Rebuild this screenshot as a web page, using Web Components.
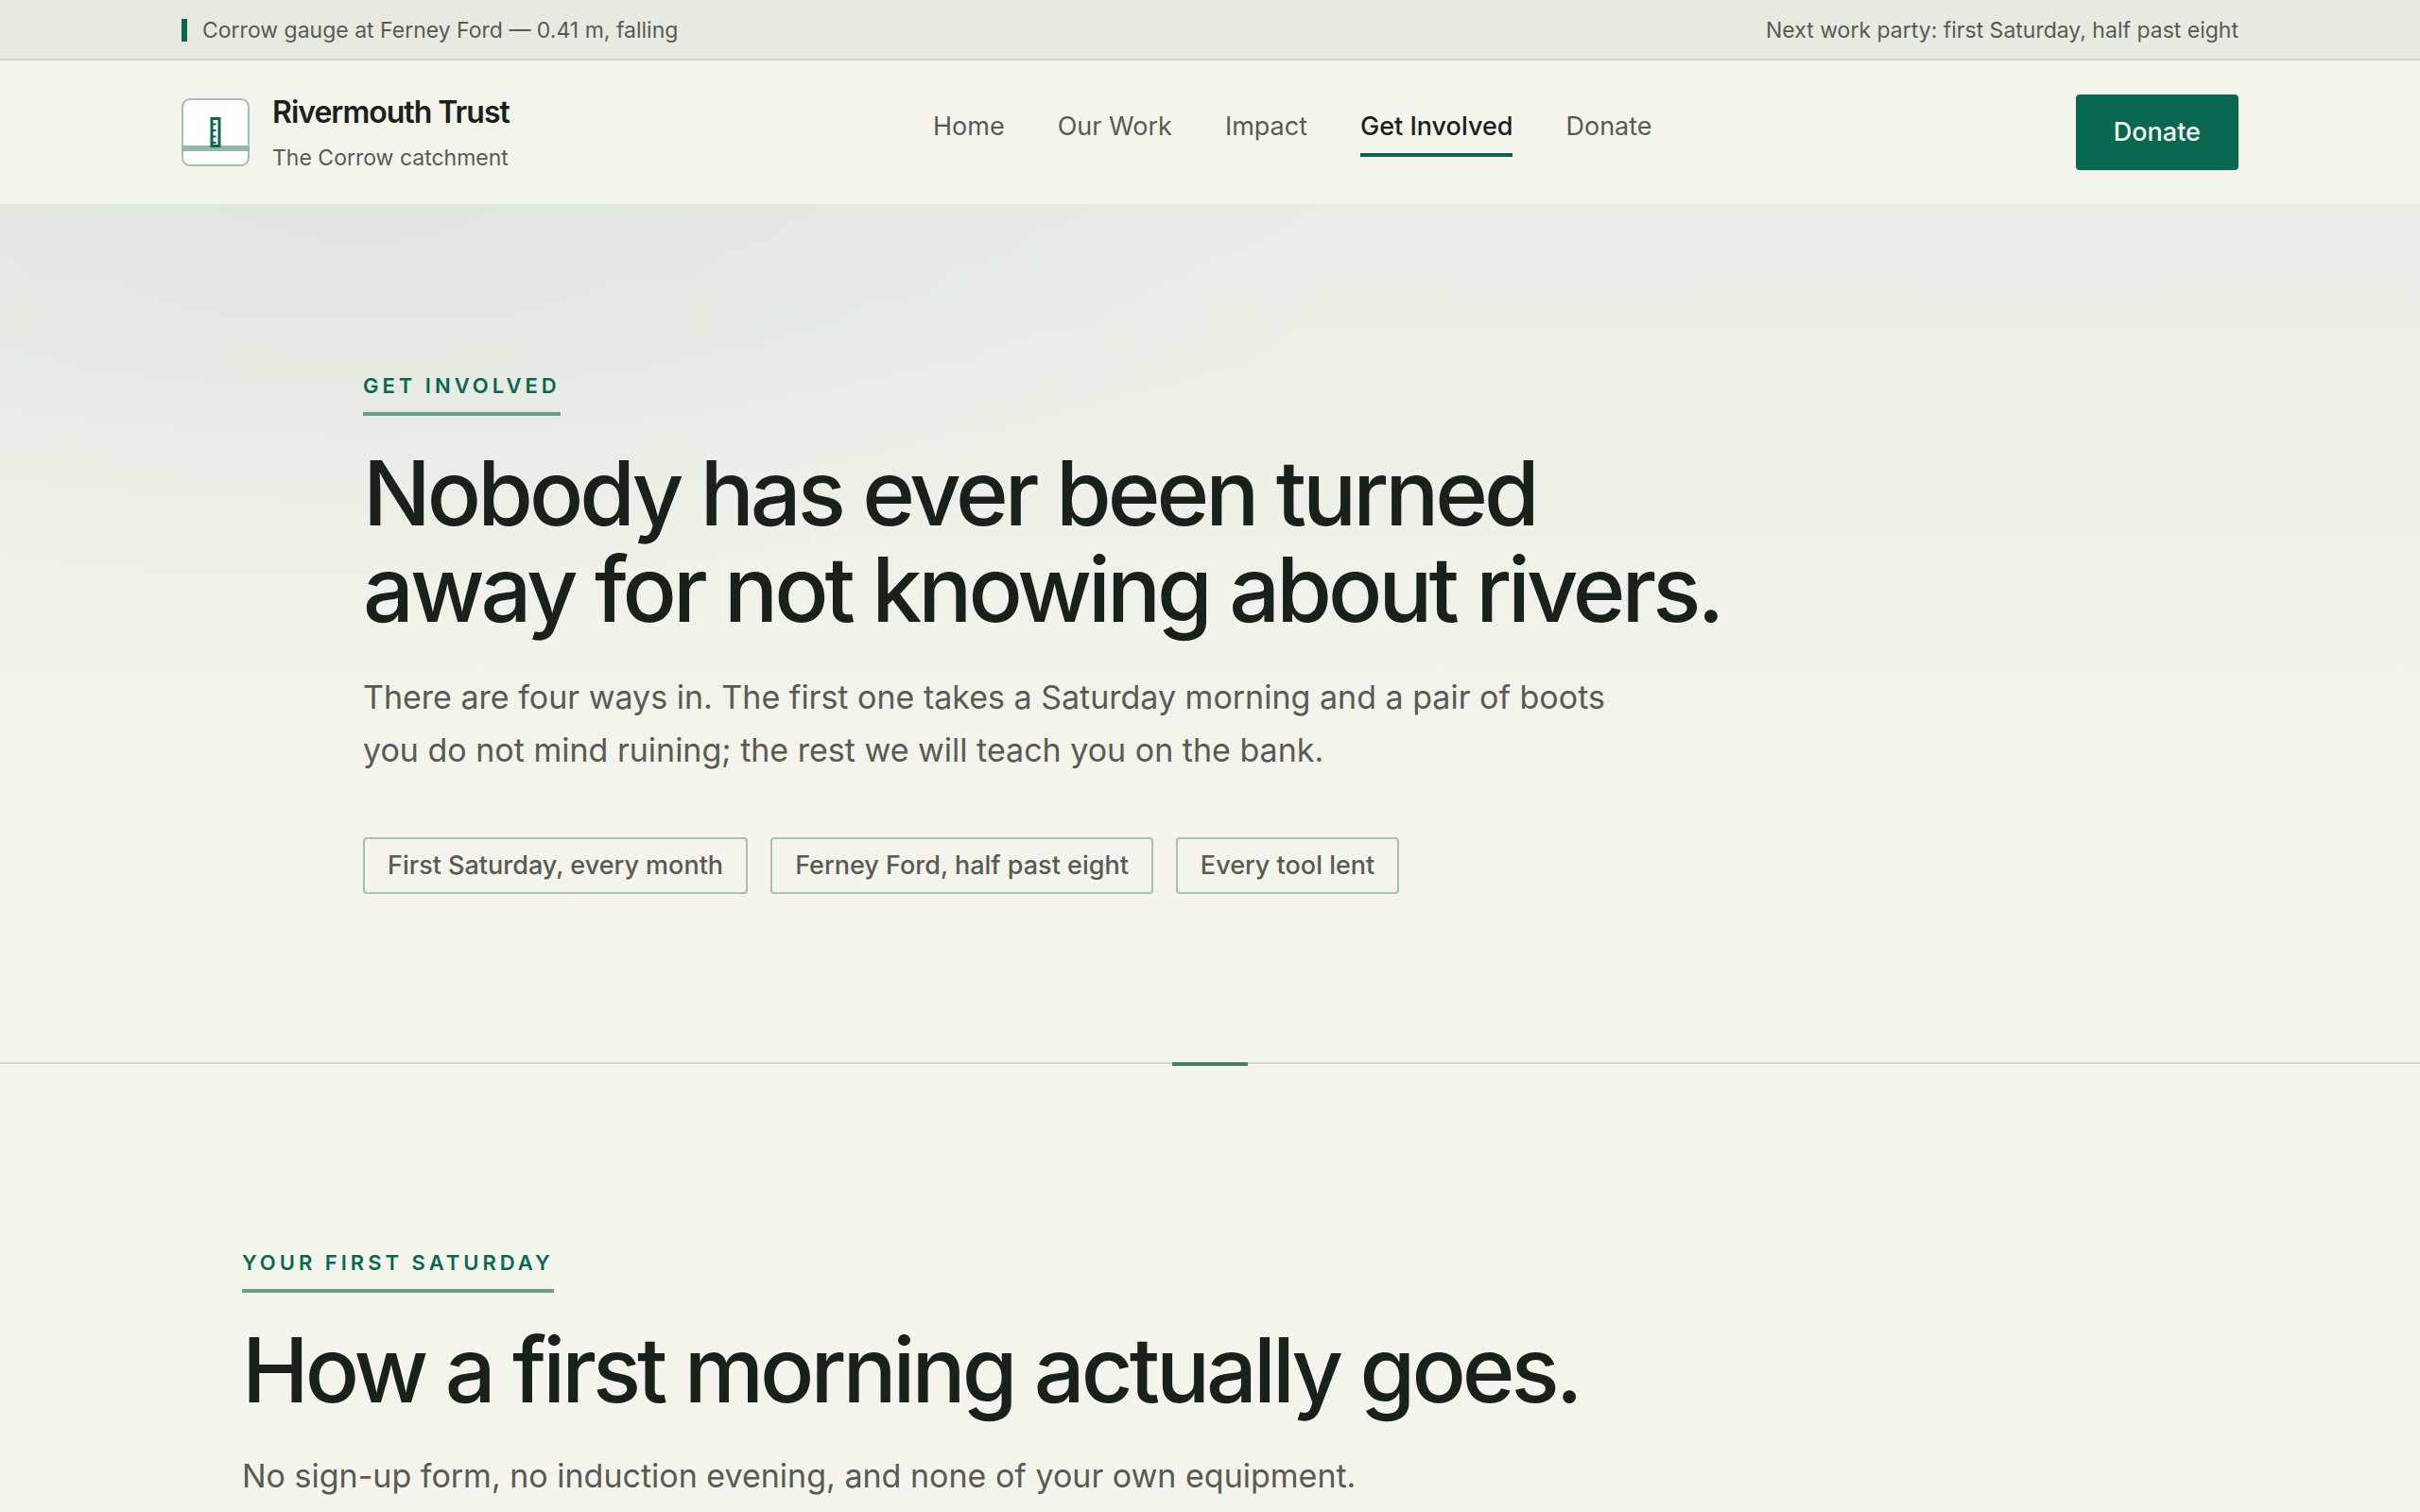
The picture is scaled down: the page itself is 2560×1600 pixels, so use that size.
<!DOCTYPE html>
<html lang="en">
<head>
<meta charset="utf-8">
<meta name="viewport" content="width=device-width, initial-scale=1">
<title>Get Involved — Rivermouth Trust</title>
<style>
  :root {
    --paper: #f4f4ec;
    --mist: #e7eae1;
    --line: #d2d7cc;
    --ink: #18211a;
    --muted: #575b53;
    --green: #09674f;
    --green-soft: #6c9f89;
    --green-line: #a9c0b1;
    --gutter: 192px;
  }
  body {
    margin: 0;
    min-height: 100vh;
    background: var(--paper);
    color: var(--ink);
    font-family: Inter, "Liberation Sans", sans-serif;
    font-size: 27px;
  }
</style>
</head>
<body>
<gauge-bar>
  <span slot="reading">Corrow gauge at Ferney Ford — 0.41 m, falling</span>
  <span slot="event">Next work party: first Saturday, half past eight</span>
</gauge-bar>
<site-header>
  <brand-mark slot="brand">Rivermouth Trust<span slot="place">The Corrow catchment</span></brand-mark>
  <nav-link href="#home">Home</nav-link>
  <nav-link href="#work">Our Work</nav-link>
  <nav-link href="#impact">Impact</nav-link>
  <nav-link href="#involved" current>Get Involved</nav-link>
  <nav-link href="#donate">Donate</nav-link>
  <donate-button slot="action">Donate</donate-button>
</site-header>
<main>
  <page-hero>
    <section-intro level="1">
      <span slot="eyebrow">Get involved</span>
      <span slot="title">Nobody has ever been turned<br>away for not knowing about rivers.</span>
      <span slot="lead">There are four ways in. The first one takes a Saturday morning and a pair of boots<br>you do not mind ruining; the rest we will teach you on the bank.</span>
    </section-intro>
    <fact-chip slot="facts">First Saturday, every month</fact-chip>
    <fact-chip slot="facts">Ferney Ford, half past eight</fact-chip>
    <fact-chip slot="facts">Every tool lent</fact-chip>
  </page-hero>
  <section-rule></section-rule>
  <page-section>
    <section-intro level="2">
      <span slot="eyebrow">Your first Saturday</span>
      <span slot="title">How a first morning actually goes.</span>
      <span slot="lead">No sign-up form, no induction evening, and none of your own equipment.</span>
    </section-intro>
  </page-section>
</main>
<script>
  const define = (name, html, setup) => {
    const template = document.createElement('template');
    template.innerHTML = html;
    customElements.define(name, class extends HTMLElement {
      constructor() {
        super();
        this.attachShadow({ mode: 'open' }).append(template.content.cloneNode(true));
      }
      connectedCallback() {
        if (setup) setup(this, this.shadowRoot);
      }
    });
  };

  define('gauge-bar', `
    <style>
      :host {
        display: flex; justify-content: space-between; align-items: center;
        padding: 14px var(--gutter) 12px; border-bottom: 2px solid var(--line);
        background: var(--mist); color: var(--muted);
        font-size: 23px; line-height: 36px;
      }
      .reading { display: flex; align-items: center; gap: 16px; }
      .level { width: 6px; height: 24px; background: var(--green); }
    </style>
    <div class="reading"><i class="level"></i><slot name="reading"></slot></div>
    <slot name="event"></slot>`);

  define('brand-mark', `
    <style>
      :host { display: block; }
      a { display: flex; align-items: center; gap: 24px; color: inherit; text-decoration: none; }
      svg { display: block; width: 72px; height: 72px; }
      .words { display: flex; flex-direction: column; gap: 8px; }
      .name { font-size: 32px; line-height: 46px; font-weight: 600; letter-spacing: -1px; }
      .place { font-size: 23px; line-height: 34px; color: var(--muted); }
    </style>
    <a href="#home">
      <svg viewBox="0 0 72 72" aria-hidden="true">
        <rect x="1" y="1" width="70" height="70" rx="8" fill="#fefefb" stroke="#a3bfb2" stroke-width="2"/>
        <rect y="50" width="72" height="6" fill="#92b7a7"/>
        <path d="M32 21.500H40V50.500H32Z" fill="#fefefb" stroke="#09674f" stroke-width="3"/>
        <path d="M32 27.500H36.500M32 34H36.500M32 40.500H36.500M32 47H36.500" stroke="#09674f" stroke-width="2.200"/>
      </svg>
      <span class="words"><span class="name"><slot></slot></span><span class="place"><slot name="place"></slot></span></span>
    </a>`);

  define('nav-link', `
    <style>
      :host { display: block; }
      a {
        display: block; padding-bottom: 8px; border-bottom: 4px solid transparent;
        color: var(--muted); text-decoration: none; font-size: 27px; line-height: 40px;
      }
      :host([current]) a { color: var(--ink); font-weight: 500; border-color: var(--green); }
    </style>
    <a><slot></slot></a>`, (host, root) => {
      const a = root.querySelector('a');
      a.href = host.getAttribute('href');
      if (host.hasAttribute('current')) a.setAttribute('aria-current', 'page');
    });

  define('donate-button', `
    <style>
      :host { display: block; }
      button {
        display: block; margin: 0; padding: 20px 40px; border: 0; border-radius: 4px;
        background: var(--green); color: #f4fbf5;
        font: 500 27px/40px Inter, "Liberation Sans", sans-serif;
      }
    </style>
    <button type="button"><slot></slot></button>`);

  define('site-header', `
    <style>
      :host { display: block; }
      header {
        display: flex; justify-content: space-between; align-items: center;
        padding: 32px var(--gutter); background: var(--paper);
      }
      nav { display: flex; gap: 56px; }
    </style>
    <header>
      <slot name="brand"></slot>
      <nav aria-label="Main"><slot></slot></nav>
      <slot name="action"></slot>
    </header>`);

  define('section-intro', `
    <style>
      :host { display: flex; flex-direction: column; align-items: flex-start; }
      .eyebrow {
        margin: 0; padding-bottom: 12px; border-bottom: 4px solid var(--green-soft);
        color: var(--green); font-size: 22px; line-height: 32px; font-weight: 600;
        letter-spacing: 4px; text-transform: uppercase;
      }
      .title {
        margin: 31px 0 0; font-size: 95px; line-height: 102px; font-weight: 500;
        letter-spacing: -4px;
      }
      .lead { margin: 35px 0 0; font-size: 34px; line-height: 56px; color: var(--muted); }
      :host([level="2"]) .lead { margin-top: 33px; }
    </style>
    <p class="eyebrow"><slot name="eyebrow"></slot></p>
    <div class="title" role="heading"><slot name="title"></slot></div>
    <p class="lead"><slot name="lead"></slot></p>`, (host, root) => {
      root.querySelector('.title').setAttribute('aria-level', host.getAttribute('level'));
    });

  define('fact-chip', `
    <style>
      :host {
        display: block; padding: 8px 24px; border: 2px solid var(--green-line); border-radius: 4px;
        color: var(--muted); font-size: 27px; line-height: 40px; font-weight: 500;
      }
    </style>
    <slot></slot>`);

  define('page-hero', `
    <style>
      :host {
        display: block; padding: 176px calc(var(--gutter) * 2) 178px;
        background:
          radial-gradient(ellipse 42% 46% at 15% 0%, rgba(9, 103, 79, .055), rgba(9, 103, 79, 0)),
          linear-gradient(#eaede5, var(--paper) 70%);
      }
      .facts { display: flex; flex-wrap: wrap; gap: 24px; margin-top: 64px; }
    </style>
    <slot></slot>
    <div class="facts"><slot name="facts"></slot></div>`);

  define('section-rule', `
    <style>
      :host { display: flex; justify-content: center; height: 2px; background: var(--line); }
      i { width: 80px; height: 4px; background: #418265; }
    </style>
    <i></i>`);

  define('page-section', `
    <style>
      :host { display: block; padding: 194px 256px 0; }
    </style>
    <slot></slot>`);
</script>
</body>
</html>
